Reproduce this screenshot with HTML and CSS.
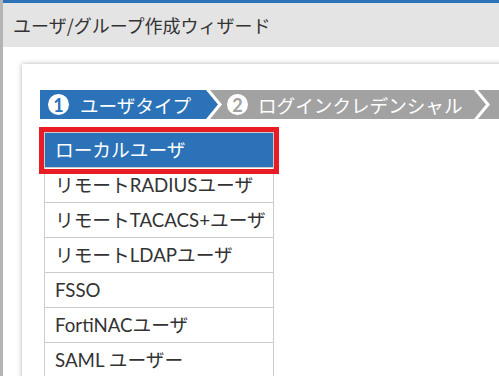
FILE: index.html
```html
<!doctype html>
<html>
<head>
<meta charset="utf-8">
<title>ユーザ/グループ作成ウィザード</title>
<link rel="stylesheet" href="styles.css">
</head>

<body>
	<div class="window">
		<div class="topbar"></div>
		<div class="header">ユーザ/グループ作成ウィザード</div>
		<div class="body">
			<div class="card">
				<div class="steps">
					<div class="step step-active"><span class="num">1</span>ユーザタイプ</div>
					<div class="step step-next"><span class="num">2</span>ログインクレデンシャル</div>
					<div class="step step-rest"></div>
				</div>
				<ul class="types">
					<li class="selected">ローカルユーザ</li>
					<li>リモートRADIUSユーザ</li>
					<li>リモートTACACS+ユーザ</li>
					<li>リモートLDAPユーザ</li>
					<li>FSSO</li>
					<li>FortiNACユーザ</li>
					<li>SAML ユーザー</li>
				</ul>
			</div>
		</div>
	</div>
</body>
</html>
```

FILE: styles.css
```css
* { margin:0; padding:0; box-sizing:border-box; }
html, body { height:100%; overflow:hidden; }
body { background:#fff; font-family:"Lato", "Noto Sans CJK JP", sans-serif; }
.window { display:flex; flex-direction:column; height:100%; border-left:3px solid #b4b4b4; }
.topbar { height:3px; background:#2b72b8; }
.header { height:44px; padding-left:10px; line-height:44px; background:#e4e4e4; color:#333; font-family:"Noto Sans CJK JP", sans-serif; font-size:18px; }
.body { flex:1; padding:17px 0 0 19px; overflow:hidden; }
.card { height:400px; margin-right:-20px; padding:26px 0 0 18px; background:#fff; box-shadow:0 0 5px rgba(0,0,0,.3); }

/* steps */
.steps { display:flex; height:29px; margin-bottom:13px; }
.step { display:flex; align-items:center; color:#fff; font-family:"Noto Sans CJK JP", sans-serif; font-size:18.6px; white-space:nowrap; }
.num { display:flex; align-items:center; justify-content:center; width:21px; height:21px; margin-right:11px; border-radius:50%; background:#fff; font-family:"Lato", sans-serif; font-size:18px; font-weight:bold; }
.step-active { width:178px; padding-left:8px; background:#2b72b8; clip-path:polygon(0 0, calc(100% - 12px) 0, 100% 50%, calc(100% - 12px) 100%, 0 100%); }
.step-active .num { color:#2b72b8; }
.step-next { width:276px; margin-left:-8px; padding-left:17px; background:#a2a2a2; clip-path:polygon(0 0, calc(100% - 12px) 0, 100% 50%, calc(100% - 12px) 100%, 0 100%, 12px 50%); }
.step-next .num { color:#a2a2a2; margin-right:10px; }
.step-rest { flex:1; margin-left:-8px; background:#a2a2a2; clip-path:polygon(0 0, 100% 0, 100% 100%, 0 100%, 12px 50%); }

/* user types */
.types { width:230px; margin-left:4px; border:1px solid #ccc; border-bottom:0; list-style:none; }
.types li { height:35px; padding-left:10px; border-bottom:1px solid #ccc; line-height:34px; color:#333; font-size:18.7px; white-space:nowrap; }
.types .selected { background:#2b72b8; color:#fff; outline:5px solid #e81c24; outline-offset:1px; }
```
